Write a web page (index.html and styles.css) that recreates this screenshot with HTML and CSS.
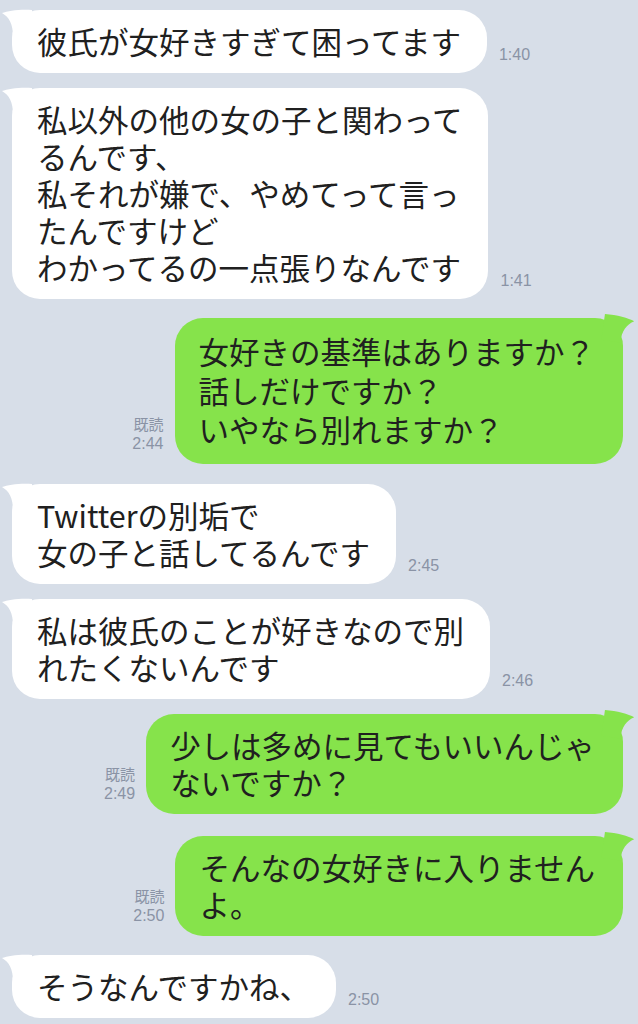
FILE: index.html
```html
<!DOCTYPE html>
<html lang="ja">
<head>
<meta charset="utf-8">
<title>LINE</title>
<link rel="stylesheet" href="styles.css">
</head>
<body>
<main class="chat">
  <div class="row in">
    <div class="bubble">
      <svg class="tail" viewBox="0 0 34 30" width="34" height="30"><path d="M2 5 C8 3 20 1 32 2 L32 28 L13 28 C13 16 9 9 2 5 Z"/></svg>
      彼氏が女好きすぎて困ってます
    </div>
    <div class="meta"><span>1:40</span></div>
  </div>

  <div class="row in">
    <div class="bubble">
      <svg class="tail" viewBox="0 0 34 30" width="34" height="30"><path d="M2 5 C8 3 20 1 32 2 L32 28 L13 28 C13 16 9 9 2 5 Z"/></svg>
      私以外の他の女の子と関わって<br>るんです、<br>私それが嫌で、やめてって言っ<br>たんですけど<br>わかってるの一点張りなんです
    </div>
    <div class="meta"><span>1:41</span></div>
  </div>

  <div class="row out gap-md">
    <div class="meta"><span>既読</span><span>2:44</span></div>
    <div class="bubble loose">
      <svg class="tail" viewBox="0 0 34 30" width="34" height="30"><path d="M2 5 C8 3 20 1 32 2 L32 28 L13 28 C13 16 9 9 2 5 Z"/></svg>
      女好きの基準はありますか？<br>話しだけですか？<br>いやなら別れますか？
    </div>
  </div>

  <div class="row in gap-lg">
    <div class="bubble">
      <svg class="tail" viewBox="0 0 34 30" width="34" height="30"><path d="M2 5 C8 3 20 1 32 2 L32 28 L13 28 C13 16 9 9 2 5 Z"/></svg>
      Twitterの別垢で<br>女の子と話してるんです
    </div>
    <div class="meta"><span>2:45</span></div>
  </div>

  <div class="row in">
    <div class="bubble">
      <svg class="tail" viewBox="0 0 34 30" width="34" height="30"><path d="M2 5 C8 3 20 1 32 2 L32 28 L13 28 C13 16 9 9 2 5 Z"/></svg>
      私は彼氏のことが好きなので別<br>れたくないんです
    </div>
    <div class="meta"><span>2:46</span></div>
  </div>

  <div class="row out">
    <div class="meta"><span>既読</span><span>2:49</span></div>
    <div class="bubble">
      <svg class="tail" viewBox="0 0 34 30" width="34" height="30"><path d="M2 5 C8 3 20 1 32 2 L32 28 L13 28 C13 16 9 9 2 5 Z"/></svg>
      少しは多めに見てもいいんじゃ<br>ないですか？
    </div>
  </div>

  <div class="row out gap-xl">
    <div class="meta"><span>既読</span><span>2:50</span></div>
    <div class="bubble">
      <svg class="tail" viewBox="0 0 34 30" width="34" height="30"><path d="M2 5 C8 3 20 1 32 2 L32 28 L13 28 C13 16 9 9 2 5 Z"/></svg>
      そんなの女好きに入りません<br>よ。
    </div>
  </div>

  <div class="row in gap-md">
    <div class="bubble">
      <svg class="tail" viewBox="0 0 34 30" width="34" height="30"><path d="M2 5 C8 3 20 1 32 2 L32 28 L13 28 C13 16 9 9 2 5 Z"/></svg>
      そうなんですかね、
    </div>
    <div class="meta"><span>2:50</span></div>
  </div>
</main>
</body>
</html>
```

FILE: styles.css
```css
html, body {
  margin: 0;
  padding: 0;
  background: #d7dee8;
}

body {
  width: 638px;
  height: 1024px;
  overflow: hidden;
  font-family: "Noto Sans CJK JP", "Noto Sans", sans-serif;
  color: #202020;
}

.chat {
  display: flex;
  flex-direction: column;
  gap: 15px;
  padding-top: 10px;
}

.row {
  display: flex;
  align-items: flex-end;
}

.row.gap-md { margin-top: 4px; }
.row.gap-lg { margin-top: 5px; }
.row.gap-xl { margin-top: 7px; }

.row.in {
  padding-left: 12px;
}

.row.out {
  justify-content: flex-end;
  padding-right: 15px;
}

.bubble {
  position: relative;
  font-size: 30.5px;
  line-height: 37px;
  padding: 13px 26px 13px 25px;
  border-radius: 28px;
  background: #ffffff;
  white-space: nowrap;
}

.bubble.loose {
  line-height: 39px;
  padding-top: 14px;
  padding-bottom: 15px;
}

.row.out .bubble {
  background: #86e34b;
  padding: 13px 28px 13px 24px;
}

.row.out .bubble.loose {
  padding-top: 14px;
  padding-bottom: 15px;
}

.tail {
  position: absolute;
  top: -2px;
  left: -12px;
  fill: #ffffff;
}

.row.out .tail {
  left: auto;
  right: -12px;
  top: -4px;
  transform: scaleX(-1) rotate(-8deg);
  fill: #86e34b;
}

.meta {
  display: flex;
  flex-direction: column;
  font-family: "Liberation Sans", "Noto Sans CJK JP", sans-serif;
  font-size: 16px;
  line-height: 19px;
  color: #8a93a5;
  padding-bottom: 11px;
}

.row.in .meta {
  margin-left: 12px;
  padding-bottom: 9px;
}

.row.out .meta {
  align-items: flex-end;
  margin-right: 11px;
}

.row.out .meta span:first-child {
  font-size: 15px;
}
```
